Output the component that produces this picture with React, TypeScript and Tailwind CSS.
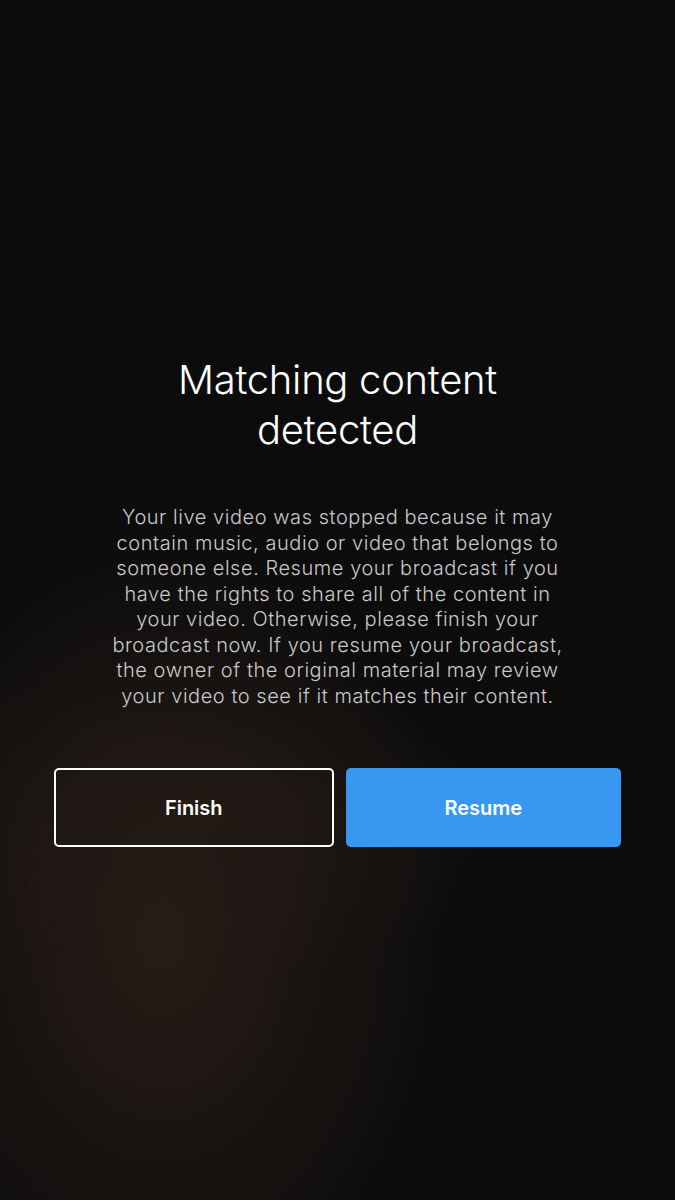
import React from "react";

const bodyLines = [
  "Your live video was stopped because it may",
  "contain music, audio or video that belongs to",
  "someone else. Resume your broadcast if you",
  "have the rights to share all of the content in",
  "your video. Otherwise, please finish your",
  "broadcast now. If you resume your broadcast,",
  "the owner of the original material may review",
  "your video to see if it matches their content.",
];

export default function App() {
  return (
    <main className="relative h-[1200px] w-full overflow-hidden bg-[#0c0c0d] font-['Inter','Liberation_Sans',sans-serif] text-white">
      <div className="pointer-events-none absolute inset-0 bg-[radial-gradient(ellipse_300px_420px_at_24%_78%,rgba(44,32,24,0.85),transparent_100%)]" />
      <div className="pointer-events-none absolute inset-0 bg-[radial-gradient(ellipse_340px_160px_at_30%_68%,rgba(36,28,22,0.6),transparent_100%)]" />

      <div className="relative flex flex-col items-center px-[54px] pt-[355px]">
        <h1 className="text-center text-[40px] font-light leading-[50px] tracking-[-0.3px]">
          Matching content
          <br />
          detected
        </h1>

        <p className="mt-[50px] text-center text-[20px] font-light leading-[25.5px] tracking-[0.55px] text-[#c9c9c9]">
          {bodyLines.map((line, i) => (
            <span key={i} className="block whitespace-nowrap">
              {line}
            </span>
          ))}
        </p>

        <div className="mt-[59px] flex w-full gap-3">
          <button
            type="button"
            className="flex h-[79px] flex-1 items-center justify-center rounded-[5px] border-2 border-white text-[20px] font-semibold"
          >
            Finish
          </button>
          <button
            type="button"
            className="flex h-[79px] flex-1 items-center justify-center rounded-[5px] bg-[#3897f0] text-[20px] font-semibold"
          >
            Resume
          </button>
        </div>
      </div>
    </main>
  );
}
